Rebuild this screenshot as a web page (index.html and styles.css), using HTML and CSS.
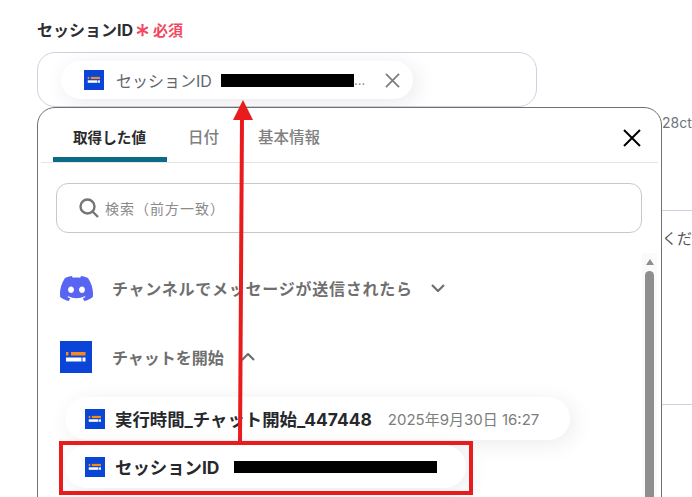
FILE: index.html
```html
<!DOCTYPE html>
<html lang="ja">
<head>
<meta charset="utf-8">
<title>セッションID</title>
<link rel="stylesheet" href="styles.css">
</head>
<body>
<svg class="defs" width="0" height="0" aria-hidden="true">
  <symbol id="chat" viewBox="0 0 32 32">
    <rect width="32" height="32" fill="#0b45d8"/>
    <rect x="6" y="11" width="2.4" height="3.5" fill="#f58a1f"/>
    <rect x="11" y="11" width="14.5" height="3.5" fill="#f58a1f"/>
    <rect x="6" y="16.5" width="15.5" height="4" fill="#fff"/>
    <rect x="22.5" y="16.5" width="3" height="4" fill="#fff"/>
  </symbol>
</svg>

<main class="page">
  <div class="label-row">
    <span class="label">セッションID</span>
    <span class="star">*</span>
    <span class="req">必須</span>
  </div>
  <div class="field">
    <div class="chip">
      <svg class="chip-icon"><use href="#chat"/></svg>
      <span class="chip-name">セッションID</span>
      <span class="redact redact-a"></span>
      <span class="dots">...</span>
      <svg class="chip-x" viewBox="0 0 16 16"><path d="M1 1l14 14M15 1L1 15"/></svg>
    </div>
  </div>
  <div class="behind">
    <div class="count">28ct</div>
    <hr class="rule rule-a">
    <div class="note">くだ</div>
    <hr class="rule rule-b">
  </div>
</main>

<section class="panel">
  <div class="tabs">
    <span class="tab tab-on">取得した値</span>
    <span class="tab tab-date">日付</span>
    <span class="tab tab-info">基本情報</span>
    <svg class="close" viewBox="0 0 18 18"><path d="M1 1l16 16M17 1L1 17"/></svg>
  </div>
  <div class="search">
    <svg class="lens" viewBox="0 0 20 20"><circle cx="8.5" cy="8.5" r="7"/><path d="M13.5 13.5l5.5 5.5"/></svg>
    <span class="search-text">検索（前方一致）</span>
  </div>
  <div class="body">
    <div class="list">
      <div class="group group-discord">
        <svg class="discord" viewBox="0 0 24 24"><path d="M20.317 4.3698a19.7913 19.7913 0 00-4.8851-1.5152.0741.0741 0 00-.0785.0371c-.211.3753-.4447.8648-.6083 1.2495-1.8447-.2762-3.68-.2762-5.4868 0-.1636-.3933-.4058-.8742-.6177-1.2495a.077.077 0 00-.0785-.037 19.7363 19.7363 0 00-4.8852 1.515.0699.0699 0 00-.0321.0277C.5334 9.0458-.319 13.5799.0992 18.0578a.0824.0824 0 00.0312.0561c2.0528 1.5076 4.0413 2.4228 5.9929 3.0294a.0777.0777 0 00.0842-.0276c.4616-.6304.8731-1.2952 1.226-1.9942a.076.076 0 00-.0416-.1057c-.6528-.2476-1.2743-.5495-1.8722-.8923a.077.077 0 01-.0076-.1277c.1258-.0943.2517-.1923.3718-.2914a.0743.0743 0 01.0776-.0105c3.9278 1.7933 8.18 1.7933 12.0614 0a.0739.0739 0 01.0785.0095c.1202.099.246.1981.3728.2924a.077.077 0 01-.0066.1276 12.2986 12.2986 0 01-1.873.8914.0766.0766 0 00-.0407.1067c.3604.698.7719 1.3628 1.225 1.9932a.076.076 0 00.0842.0286c1.961-.6067 3.9495-1.5219 6.0023-3.0294a.077.077 0 00.0313-.0552c.5004-5.177-.8382-9.6739-3.5485-13.6604a.061.061 0 00-.0312-.0286zM8.02 15.3312c-1.1825 0-2.1569-1.0857-2.1569-2.419 0-1.3332.9555-2.4189 2.157-2.4189 1.2108 0 2.1757 1.0952 2.1568 2.419 0 1.3332-.9555 2.4189-2.1569 2.4189zm7.9748 0c-1.1825 0-2.1569-1.0857-2.1569-2.419 0-1.3332.9554-2.4189 2.1569-2.4189 1.2108 0 2.1757 1.0952 2.1568 2.419 0 1.3332-.946 2.4189-2.1568 2.4189Z"/></svg>
        <span class="group-name">チャンネルでメッセージが送信されたら</span>
        <svg class="chev chev-down" viewBox="0 0 14 8"><path d="M1 1l6 6 6-6"/></svg>
      </div>
      <div class="group group-chat">
        <svg class="group-icon"><use href="#chat"/></svg>
        <span class="group-name">チャットを開始</span>
        <svg class="chev chev-up" viewBox="0 0 14 8"><path d="M1 7l6-6 6 6"/></svg>
      </div>
      <div class="item item-time">
        <svg class="item-icon"><use href="#chat"/></svg>
        <span class="item-name">実行時間_チャット開始_447448</span>
        <span class="item-value">2025年9月30日 16:27</span>
      </div>
      <div class="item item-session">
        <svg class="item-icon"><use href="#chat"/></svg>
        <span class="item-name">セッションID</span>
        <span class="redact redact-b"></span>
      </div>
    </div>
    <div class="scroll">
      <span class="scroll-up"></span>
      <span class="scroll-thumb"></span>
    </div>
  </div>
</section>

<div class="mark-box"></div>
<svg class="arrow" viewBox="0 0 692 497" aria-hidden="true">
  <path class="arrow-line" d="M240 443L242 118"/>
  <path class="arrow-head" d="M243 100L253 120H233Z"/>
</svg>
</body>
</html>
```

FILE: styles.css
```css
* { box-sizing: border-box; }

html, body {
  margin: 0;
  height: 497px;
  overflow: hidden;
  background: #fff;
}

body {
  position: relative;
  font-family: Inter, "Noto Sans CJK JP", sans-serif;
  color: #2b2d33;
}

.defs { position: absolute; }

.page { padding: 18px 0 0 37px; height: 497px; overflow: hidden; }

.label-row {
  display: flex;
  align-items: center;
  height: 22px;
}
.label { font-size: 16px; font-weight: 700; width: 98px; white-space: nowrap; }
.star { font-size: 30px; line-height: 22px; color: #f2475f; width: 18px; padding-top: 11px; }
.req { font-size: 15px; font-weight: 700; color: #f2475f; }

.field {
  width: 500px;
  height: 55px;
  margin-top: 12px;
  padding: 8px 0 0 23px;
  border: 1px solid #ccd3e0;
  border-radius: 18px;
}

.chip {
  display: flex;
  align-items: center;
  width: 352px;
  height: 38px;
  padding-left: 23px;
  border-radius: 19px;
  background: #fff;
  box-shadow: 4px 4px 22px rgba(0, 0, 0, 0.09);
}
.chip-icon { width: 20px; height: 20px; flex: none; }
.chip-name { margin-left: 12px; width: 105px; font-size: 16px; color: #5f6670; flex: none; }
.redact { display: block; background: #000; flex: none; }
.redact-a { width: 133px; height: 13px; }
.dots { width: 31px; font-size: 13px; color: #8a8f98; }
.chip-x { width: 15px; height: 15px; flex: none; }
.chip-x path { fill: none; stroke: #808080; stroke-width: 2; }

.behind { margin: 4px 0 0 625px; font-size: 14px; color: #6d7480; }
.count { height: 24px; line-height: 24px; margin-top: 1px; white-space: nowrap; }
.rule { border: 0; height: 1px; margin: 0; background: #ccd3e0; }
.rule-a { margin-top: 75px; }
.note { margin-top: 16px; height: 24px; line-height: 24px; font-size: 15px; color: #555; white-space: nowrap; }
.rule-b { margin-top: 153px; }

.panel {
  position: absolute;
  left: 37px;
  top: 107px;
  width: 625px;
  height: 420px;
  padding: 0 3px;
  background: #fff;
  border: 1px solid #6f7072;
  border-radius: 18px;
}

.tabs {
  position: relative;
  display: flex;
  height: 55px;
  border-bottom: 1px solid #e2e4e8;
}
.tab {
  height: 54px;
  padding-top: 18px;
  line-height: 24px;
  font-size: 15.5px;
  font-weight: 500;
  color: #808080;
}
.tab-on {
  width: 114px;
  margin-left: 12px;
  padding-left: 20px;
  font-size: 14.6px;
  color: #2b2b2b;
  font-weight: 700;
  border-bottom: 5px solid #0b6a85;
  border-radius: 5px 5px 0 0;
}
.tab-date { margin-left: 21px; width: 70px; }
.close {
  position: absolute;
  right: 17px;
  top: 21px;
  width: 18px;
  height: 18px;
}
.close path { fill: none; stroke: #000; stroke-width: 2; }

.search {
  display: flex;
  align-items: center;
  width: 586px;
  height: 50px;
  margin: 20px 0 0 15px;
  padding-left: 22px;
  gap: 6px;
  font-size: 14px;
  color: #8a8a8a;
  border: 1px solid #c8c8c8;
  border-radius: 12px;
}
.search-text { letter-spacing: 1px; }
.lens { width: 20px; height: 20px; flex: none; }
.lens circle, .lens path { fill: none; stroke: #757575; stroke-width: 2.4; }

.body { display: flex; margin-top: 20px; }
.list { width: 601px; padding-left: 19px; }

.group { display: flex; align-items: center; font-size: 16px; font-weight: 700; color: #6f6f6f; }
.group-discord { height: 34px; margin-top: 18px; }
.group-chat { height: 34px; margin-top: 35px; }
.discord { width: 33px; height: 33px; flex: none; fill: #5865f2; }
.group-icon { width: 32px; height: 32px; flex: none; }
.group-name { margin-left: 20px; }
.discord + .group-name { margin-left: 19px; letter-spacing: 0.75px; }
.chev { width: 14px; height: 8px; flex: none; fill: none; stroke: #6f6f6f; stroke-width: 2.2; }
.chev-down { margin-left: 18px; }
.chev-up { margin-left: 17px; }

.item {
  display: flex;
  align-items: center;
  height: 43px;
  margin-left: 5px;
  padding-left: 20px;
  border-radius: 22px;
  background: #fff;
  box-shadow: 4px 4px 22px rgba(0, 0, 0, 0.08);
}
.item-time { width: 505px; margin-top: 23px; }
.item-session { width: 401px; margin-top: 5px; }
.item-icon { width: 20px; height: 20px; flex: none; }
.item-name { margin-left: 10px; font-size: 17.4px; font-weight: 700; color: #26282c; white-space: nowrap; }
.item-value { margin-left: 16px; font-size: 15px; color: #7d7d7d; white-space: nowrap; }
.redact-b { width: 203px; height: 12px; margin-left: 15px; }

.scroll {
  display: flex;
  flex-direction: column;
  align-items: center;
  width: 15px;
  height: 250px;
  background: #fafafa;
}
.scroll-up {
  width: 0;
  height: 0;
  margin-top: 6px;
  border-left: 4px solid transparent;
  border-right: 4px solid transparent;
  border-bottom: 6px solid #8e8e8e;
}
.scroll-thumb {
  width: 9px;
  height: 240px;
  margin-top: 6px;
  border-radius: 5px 5px 0 0;
  background: #8e8e8e;
}

.mark-box {
  position: absolute;
  left: 59px;
  top: 441px;
  width: 414px;
  height: 54px;
  border: 4px solid #e81c1c;
}

.arrow {
  position: absolute;
  left: 0;
  top: 0;
  width: 692px;
  height: 497px;
  pointer-events: none;
}
.arrow-line { fill: none; stroke: #e81c1c; stroke-width: 4; }
.arrow-head { fill: #e81c1c; }
```
